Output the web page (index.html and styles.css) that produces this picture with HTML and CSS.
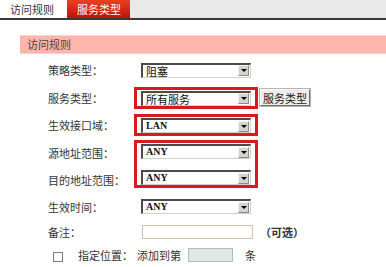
FILE: index.html
```html
<!DOCTYPE html>
<html lang="zh-CN">
<head>
  <meta charset="UTF-8" />
  <title>访问规则</title>
  <link rel="stylesheet" href="styles.css">
</head>
<body>
  <div class="tabs">
    <div class="tab">访问规则</div>
    <div class="tab active">服务类型</div>
  </div>

  <div class="panel-title">访问规则</div>

  <div class="form">
    <div class="label">策略类型：</div>
    <div class="field">
      <div class="select"><span class="value">阻塞</span><span class="arrow"></span></div>
    </div>

    <div class="label">服务类型：</div>
    <div class="field inline">
      <div class="boxed">
        <div class="select"><span class="value">所有服务</span><span class="arrow"></span></div>
      </div>
      <button class="btn" type="button">服务类型</button>
    </div>

    <div class="label">生效接口域：</div>
    <div class="field">
      <div class="boxed">
        <div class="select"><span class="value latin">LAN</span><span class="arrow"></span></div>
      </div>
    </div>

    <div class="label">源地址范围：</div>
    <div class="field span-two">
      <div class="boxed double">
        <div class="select"><span class="value latin">ANY</span><span class="arrow"></span></div>
        <div class="select"><span class="value latin">ANY</span><span class="arrow"></span></div>
      </div>
    </div>
    <div class="label">目的地址范围：</div>

    <div class="label">生效时间：</div>
    <div class="field">
      <div class="select"><span class="value latin">ANY</span><span class="arrow"></span></div>
    </div>

    <div class="label">备注：</div>
    <div class="field inline">
      <input class="text-input" type="text" />
      <span class="hint">（可选）</span>
    </div>

    <div class="position-row">
      <span class="checkbox"></span>
      <span class="pos-label">指定位置：</span>
      <span class="pos-text">添加到第</span>
      <input class="pos-input" type="text" />
      <span class="pos-unit">条</span>
    </div>
  </div>
</body>
</html>
```

FILE: styles.css
```css
body {
  margin: 0;
  font-family: "Noto Sans CJK SC", "Liberation Sans", sans-serif;
  font-size: 11px;
  color: #333;
  background: #fff;
  width: 386px;
  height: 267px;
  overflow: hidden;
}

.tabs {
  display: flex;
  height: 18px;
  background: #e9e9e9;
  border-bottom: 2px solid #3a3a3a;
}

.tab {
  box-sizing: border-box;
  width: 67px;
  padding-left: 10px;
  line-height: 18px;
  background: #fff;
  color: #333;
}

.tab.active {
  width: 63px;
  color: #fff;
  background: linear-gradient(#e8411f, #bd130e);
}

.panel-title {
  margin: 15px 0 0 20px;
  height: 17px;
  line-height: 17px;
  padding-left: 7px;
  background: #ffb5ad;
  border-top: 1px solid #ffd3cc;
  border-bottom: 1px solid #ffd3cc;
  color: #444;
}

.form {
  display: grid;
  grid-template-columns: 93px auto;
  grid-template-rows: 28px 27px 28px 27px 27px 27px 24px 22px;
  align-items: center;
  padding-left: 48px;
  margin-top: 2px;
}

.label {
  white-space: nowrap;
}

.field {
  display: flex;
  align-items: center;
}

.field.inline {
  gap: 2px;
}

.span-two {
  grid-row: span 2;
  align-self: start;
  margin-top: 1px;
}

.boxed {
  display: flex;
  flex-direction: column;
  margin-left: -7px;
  padding: 1px 4px 0;
  border: 3px solid #da1820;
}

.boxed.double {
  gap: 11px;
}

.select {
  box-sizing: border-box;
  display: flex;
  align-items: center;
  width: 110px;
  height: 15px;
  background: #fff;
  border-top: 2px solid #4a4a4a;
  border-left: 2px solid #4a4a4a;
  border-right: 1px solid #d0d0d0;
  border-bottom: 1px solid #d0d0d0;
}

.value {
  flex: 1;
  padding-left: 3px;
  color: #111;
  line-height: 12px;
}

.value.latin {
  font-family: "Liberation Serif", serif;
  font-weight: bold;
  font-size: 10px;
}

.arrow {
  position: relative;
  box-sizing: border-box;
  width: 11px;
  height: 11px;
  margin-right: 1px;
  background: #d6d3cc;
  border-top: 1px solid #f4f4f4;
  border-left: 1px solid #f4f4f4;
  border-right: 1px solid #8a8a8a;
  border-bottom: 1px solid #8a8a8a;
}

.arrow::after {
  content: "";
  position: absolute;
  left: 2px;
  top: 3px;
  border-left: 3px solid transparent;
  border-right: 3px solid transparent;
  border-top: 3px solid #000;
}

.btn {
  box-sizing: border-box;
  width: 50px;
  height: 17px;
  padding: 0;
  font-family: inherit;
  font-size: 11px;
  color: #222;
  background: #efede8;
  border: 1px solid;
  border-color: #fff #6e6e6e #6e6e6e #fff;
  box-shadow: 0 0 0 1px #b5b5b5;
}

.text-input {
  box-sizing: border-box;
  width: 111px;
  height: 14px;
  margin: 0 0 0 1px;
  padding: 0;
  border: 1px solid #d7c3ad;
  background: #fffefa;
}

.hint {
  margin-left: 5px;
  font-weight: bold;
  color: #333;
}

.position-row {
  grid-column: 1 / -1;
  display: flex;
  align-items: center;
  margin-left: 5px;
}

.checkbox {
  box-sizing: border-box;
  width: 10px;
  height: 10px;
  margin-top: 4px;
  border: 1px solid #7c7c7c;
  background: #fff;
}

.pos-label {
  width: 59px;
  margin-left: 15px;
}

.pos-text {
  width: 51px;
}

.pos-input {
  box-sizing: border-box;
  width: 45px;
  height: 14px;
  margin: 0;
  padding: 0;
  border: 1px solid #b3bebc;
  background: #e0e8e6;
}

.pos-unit {
  margin-left: 12px;
}
```
